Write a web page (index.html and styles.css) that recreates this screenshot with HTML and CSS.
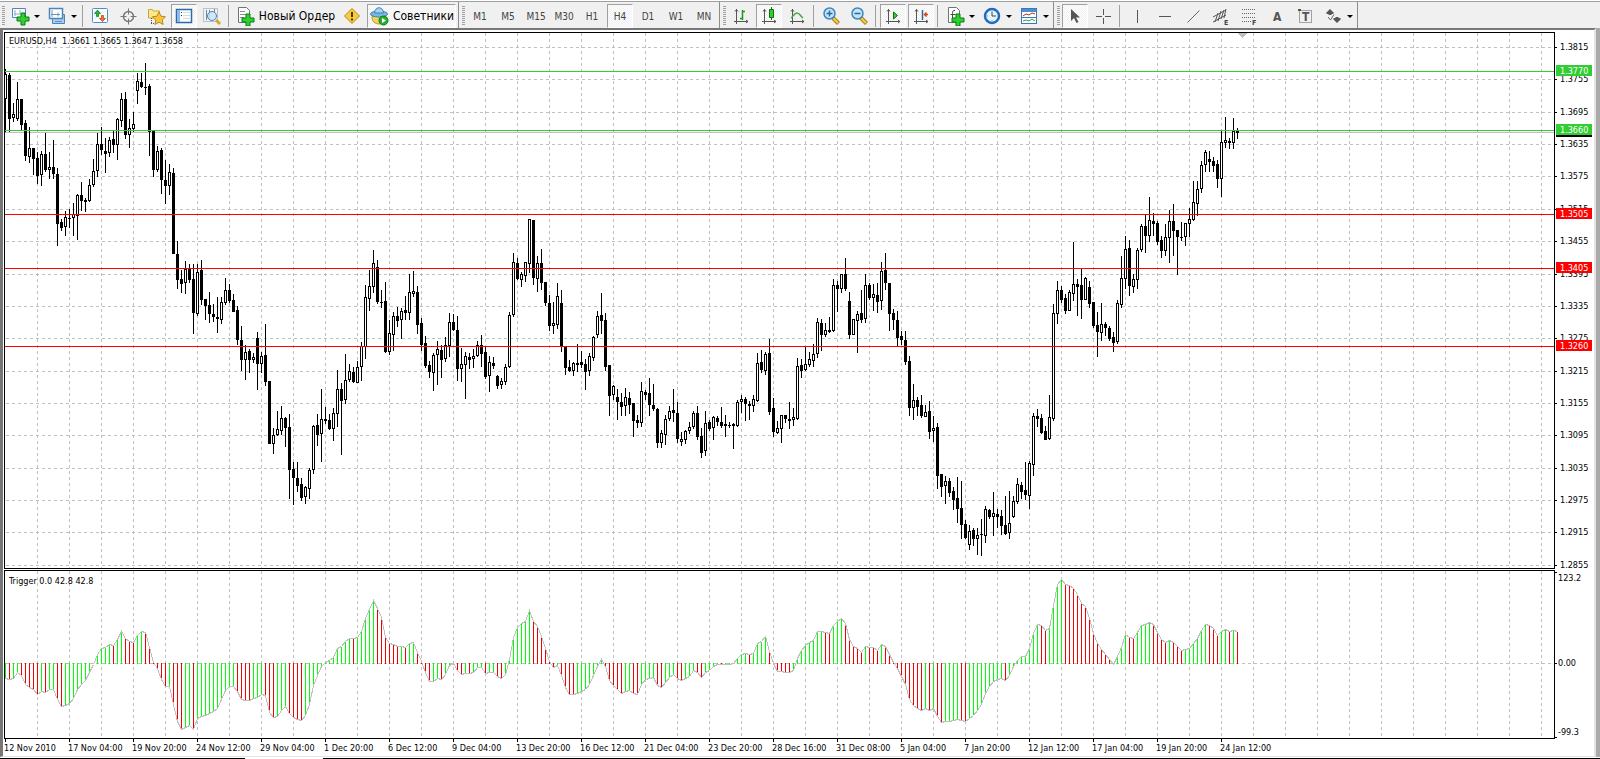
FILE: index.html
```html
<!DOCTYPE html>
<html lang="ru">
<head>
    <meta charset="UTF-8">
    <meta name="viewport" content="width=device-width, initial-scale=1.0">
    <title>EURUSD,H4</title>
    <link rel="stylesheet" href="styles.css">
</head>
<body>
    <header class="toolbars">
        <div class="toolbar">
            <span class="grip"></span>
            <button class="tool drop" aria-label="Новый график">
                <svg width="20" height="20"><path d="M2.5 2.5h13v9h-13z" fill="#fff" stroke="#4a86b8"/><path d="M5 4v6M4 8h9M10 4v3" stroke="#8ab" fill="none"/><path d="M11 7h4v4h4v4h-4v4h-4v-4H7v-4h4z" fill="#2fd02f" stroke="#0a7a14"/></svg>
                <i class="arrow"></i>
            </button>
            <button class="tool drop" aria-label="Профили">
                <svg width="20" height="20"><path d="M5.500 8.500h12v9h-12z" fill="#a8cdf0" stroke="#4a86b8"/><path d="M2.500 2.500h13v10h-13z" fill="#fff" stroke="#4a86b8" stroke-width="1.500"/><path d="M5 4v7M4 8.500h9M11 6.500v4M8 15.500h7" stroke="#6b94b8" fill="none"/></svg>
                <i class="arrow"></i>
            </button>
            <span class="sep"></span>
            <button class="tool" aria-label="Обзор рынка">
                <svg width="20" height="20"><rect x="2.500" y="2.500" width="15" height="14" rx="1" fill="#fff" stroke="#4a90cc"/><path d="M4 6h12M4 9h12M4 12h12" stroke="#dde8f0"/><path d="M7.500 4l3 3.500h-2v3h-2v-3h-2z" fill="#2cb52c" stroke="#127a12" stroke-width=".7"/><path d="M12.500 15.500l-3-3h2v-3h2v3h2z" fill="#f5742e" stroke="#b6400c" stroke-width=".7"/></svg>
            </button>
            <button class="tool" aria-label="Окно данных">
                <svg width="20" height="20" fill="none" stroke="#777"><circle cx="10.500" cy="10.500" r="5" stroke-width="1.500"/><path d="M10.500 2.500v6M10.500 12.500v6M2.500 10.500h6M12.500 10.500h6"/></svg>
            </button>
            <button class="tool" aria-label="Навигатор">
                <svg width="20" height="20"><path d="M2.500 12V3.500h4l1 1.500h6v7z" fill="#fbe88c" stroke="#c9a53a"/><path d="M5.500 12v6M5 17.500h4" stroke="#555" stroke-dasharray="1 1"/><path d="M13 6l2 4.200 4.500.6-3.300 3.100.9 4.600-4.100-2.300-4.100 2.300.9-4.600-3.300-3.100 4.500-.6z" fill="#fbc43c" stroke="#b88a1c"/></svg>
            </button>
            <button class="tool on" aria-label="Терминал">
                <svg width="20" height="20"><rect x="2.500" y="3.500" width="15" height="13" fill="#fff" stroke="#2a6ba8" stroke-width="1.500"/><path d="M3 4h3v12H3z" fill="#8ebce6"/><path d="M7 6.500h1M7 9.500h1" stroke="#333"/><path d="M9 6.500h7M9 9.500h7M9 12.500h7" stroke="#d0dcea"/></svg>
            </button>
            <button class="tool" aria-label="Тестер стратегий">
                <svg width="20" height="20"><path d="M1.500 2.500h14v13h-14z" fill="#f2f4f4" stroke="#b8c0c4"/><path d="M4.500 4v10M7.500 4v9M12.500 3v4" stroke="#6b8ba4"/><circle cx="10" cy="10" r="4.500" fill="#c8e4f8" fill-opacity=".8" stroke="#4a86b8"/><path d="M14 14l4 4" stroke="#d6a52c" stroke-width="3"/></svg>
            </button>
            <span class="sep"></span>
            <button class="tool order">
                <svg width="20" height="20"><path d="M3.500 1.500h8l3 3v12h-11z" fill="#fff" stroke="#6c7478"/><path d="M5 5.500h5M5 8.500h7M5 11.500h4" stroke="#8a9094"/><path d="M11 8h4v4h4v4h-4v4h-4v-4H7v-4h4z" fill="#2fd02f" stroke="#0a7a14"/></svg>
                <span>Новый Ордер</span>
            </button>
            <button class="tool" aria-label="MetaEditor">
                <svg width="20" height="20"><path d="M10 2.500l7.500 7.500-7.500 7.500L2.500 10z" fill="#f7cc3e" stroke="#b58b18" stroke-linejoin="round"/><path d="M10 6v5M10 12.500v2" stroke="#4a3a08" stroke-width="2"/></svg>
            </button>
            <button class="tool on experts">
                <svg width="20" height="20"><ellipse cx="10" cy="12" rx="7" ry="6" fill="#f6d45c" stroke="#b8962c"/><ellipse cx="10" cy="8" rx="8.500" ry="3" fill="#7ab8e4" stroke="#3a80b4"/><path d="M5.500 7C6 0 14 0 14.500 7z" fill="#a4d4f4" stroke="#3a80b4"/><circle cx="14.500" cy="14.500" r="4.500" fill="#24b02c" stroke="#0e7a18"/><path d="M13 12l4 2.500-4 2.500z" fill="#fff"/></svg>
                <span>Советники</span>
            </button>
        </div>

        <div class="toolbar">
            <span class="grip"></span>
            <button class="tool">M1</button>
            <button class="tool">M5</button>
            <button class="tool">M15</button>
            <button class="tool">M30</button>
            <button class="tool">H1</button>
            <button class="tool on">H4</button>
            <button class="tool">D1</button>
            <button class="tool">W1</button>
            <button class="tool">MN</button>
        </div>

        <div class="toolbar">
            <span class="grip"></span>
            <button class="tool" aria-label="Бары">
                <svg width="20" height="20" fill="none" stroke="#555"><path d="M5.500 3v15M3 15.500h14M4 5.500l1.500-2 1.500 2M15 14l2 1.500-2 1.500"/><path d="M11.500 4v10M11 5.500h3M9 12.500h3" stroke="#1a9a1a" stroke-width="1.500"/></svg>
            </button>
            <button class="tool on" aria-label="Свечи">
                <svg width="20" height="20" fill="none" stroke="#555"><path d="M5.500 3v15M3 15.500h14M4 5.500l1.500-2 1.500 2M15 14l2 1.500-2 1.500"/><path d="M12.500 1v13" stroke="#107010"/><path d="M10.500 3.500h4v8h-4z" fill="#2fd02f" stroke="#107010"/></svg>
            </button>
            <button class="tool" aria-label="Линия">
                <svg width="20" height="20" fill="none" stroke="#555"><path d="M5.500 3v15M3 15.500h14M4 5.500l1.500-2 1.500 2M15 14l2 1.500-2 1.500"/><path d="M4 12c2-1 3-5 6-5s3 3 6 5" stroke="#4aa84a" stroke-width="1.500"/></svg>
            </button>
            <span class="sep"></span>
            <button class="tool" aria-label="Увеличить">
                <svg width="20" height="20"><path d="M12 12l5.500 5.500" stroke="#a87a14" stroke-width="4"/><path d="M12 12l5 5" stroke="#f6d24a" stroke-width="2"/><circle cx="8.500" cy="7.500" r="5.500" fill="#c4e4fa" stroke="#3f86bc" stroke-width="1.500"/><path d="M5.500 7.500h6M8.500 4.500v6" stroke="#2a6a9a" stroke-width="1.500"/></svg>
            </button>
            <button class="tool" aria-label="Уменьшить">
                <svg width="20" height="20"><path d="M12 12l5.500 5.500" stroke="#a87a14" stroke-width="4"/><path d="M12 12l5 5" stroke="#f6d24a" stroke-width="2"/><circle cx="8.500" cy="7.500" r="5.500" fill="#c4e4fa" stroke="#3f86bc" stroke-width="1.500"/><path d="M5.500 7.500h6" stroke="#2a6a9a" stroke-width="1.500"/></svg>
            </button>
            <span class="sep"></span>
            <button class="tool on" aria-label="Автопрокрутка">
                <svg width="20" height="20" fill="none" stroke="#555"><path d="M5.500 3v15M3 15.500h14M4 5.500l1.500-2 1.500 2M15 14l2 1.500-2 1.500"/><path d="M10.500 6l4 3.500-4 3.500z" fill="#2fd02f" stroke="#107010"/></svg>
            </button>
            <button class="tool on" aria-label="Сдвиг графика">
                <svg width="20" height="20" fill="none" stroke="#555"><path d="M5.500 3v15M3 15.500h14M4 5.500l1.500-2 1.500 2M15 14l2 1.500-2 1.500"/><path d="M11.500 4v10" stroke="#2a6a9a" stroke-width="1.500"/><path d="M17 8.500h-3M15.500 6.500l-2 2 2 2" stroke="#d0481c" stroke-width="1.500"/></svg>
            </button>
            <span class="sep"></span>
            <button class="tool drop" aria-label="Индикаторы">
                <svg width="20" height="20"><path d="M3.500 1.500h8l3 3v12h-11z" fill="#fff" stroke="#6c7478"/><path d="M10 4.500c-2-.5-2.500 1-2.500 3v6M5.500 8.500h5" fill="none" stroke="#444"/><path d="M11 8h4v4h4v4h-4v4h-4v-4H7v-4h4z" fill="#2fd02f" stroke="#0a7a14"/></svg>
                <i class="arrow"></i>
            </button>
            <button class="tool drop" aria-label="Периоды">
                <svg width="20" height="20"><circle cx="10" cy="10" r="7" fill="#e8f4fc" stroke="#1e6cc0" stroke-width="2.500"/><path d="M10 5.500V10h4" fill="none" stroke="#345"/><path d="M5 10h1M10 14v1" stroke="#68a"/></svg>
                <i class="arrow"></i>
            </button>
            <button class="tool drop" aria-label="Шаблоны">
                <svg width="20" height="20"><rect x="2.500" y="2.500" width="15" height="15" fill="#fff" stroke="#3a7ab4"/><path d="M3 3h14v3H3z" fill="#4a90d0"/><path d="M4 10l3-2 3 1 3-2 3 1" fill="none" stroke="#b03020"/><path d="M3 11.500h14" stroke="#3a7ab4"/><path d="M4 15l3-1 3 1 3-2 3 2" fill="none" stroke="#30a040"/></svg>
                <i class="arrow"></i>
            </button>
        </div>

        <div class="toolbar">
            <span class="grip"></span>
            <button class="tool on" aria-label="Курсор">
                <svg width="20" height="20"><path d="M6 3v12l3-3 2.500 5 2-1-2.500-4.500h4z" fill="#555"/></svg>
            </button>
            <button class="tool" aria-label="Перекрестие">
                <svg width="20" height="20" stroke="#555"><path d="M10.500 3v6M10.500 12v6M3 10.500h6M12 10.500h6"/></svg>
            </button>
            <span class="sep"></span>
            <button class="tool" aria-label="Вертикальная линия">
                <svg width="20" height="20" stroke="#555"><path d="M10.500 4v13"/></svg>
            </button>
            <button class="tool" aria-label="Горизонтальная линия">
                <svg width="20" height="20" stroke="#555"><path d="M4 10.500h12"/></svg>
            </button>
            <button class="tool" aria-label="Трендовая линия">
                <svg width="20" height="20" stroke="#666"><path d="M4.500 16.500l12-12"/></svg>
            </button>
            <button class="tool" aria-label="Равноудалённый канал">
                <svg width="20" height="20" stroke="#555" fill="none"><path d="M2 11L15 4M2 16l13-7M4 16l3-9M7 15l3-10M10 13l3-9M13 12l2-9"/><text x="13" y="19" class="tiny">E</text></svg>
            </button>
            <button class="tool" aria-label="Линии Фибоначчи">
                <svg width="20" height="20" stroke="#666" stroke-dasharray="1 1"><path d="M3 3.500h14M3 7.500h14M3 11.500h14M3 15.500h9"/><text x="13" y="19" class="tiny">F</text></svg>
            </button>
            <button class="tool" aria-label="Текст">
                <svg width="20" height="20"><text x="6" y="15" class="letter">A</text></svg>
            </button>
            <button class="tool" aria-label="Текстовая метка">
                <svg width="20" height="20"><path d="M4.500 4.500h12v12h-12z" fill="none" stroke="#555" stroke-dasharray="1 1"/><path d="M3 3h3v2H3z" fill="#555"/><text x="7" y="15" class="letter">T</text></svg>
            </button>
            <button class="tool drop" aria-label="Стрелки">
                <svg width="20" height="20"><path d="M7 3l4 4-1 1H8.500v1h-3V8H4L3 7zM14 17l-4-4 1-1h1.500v-1h3v1H17l1 1z" fill="#555"/><path d="M5 11l2.500 3L11 8.500" fill="none" stroke="#666"/></svg>
                <i class="arrow"></i>
            </button>
        </div>
    </header>

    <main class="chart-window">
        <svg id="chart" class="chart" role="img" aria-label="EURUSD,H4"></svg>
    </main>
    <footer class="tabs"><span class="tab"></span></footer>
    <script src="script.js"></script>
</body>
</html>
```
FILE: styles.css
```css
body {
    font-family: "DejaVu Sans Condensed", "DejaVu Sans", sans-serif;
    margin: 0;
    background: #aaa;
    overflow-x: hidden;
}

.toolbars {
    display: flex;
    box-sizing: border-box;
    height: 28px;
    padding-top: 1px;
    background: #f0f0f0;
    border-top: 1px solid #fff;
    box-shadow: inset 0 1px #a0a0a0;
}

.toolbar {
    display: flex;
    align-items: stretch;
    padding: 2px 1px 0 2px;
    border-right: 1px solid #8c8c8c;
    margin-right: 1px;
}

.grip {
    width: 3px;
    margin: 2px 1px 2px 0;
    background: repeating-linear-gradient(#a0a0a0 0 1px, #f0f0f0 1px 2px);
}

.sep {
    width: 1px;
    margin: 1px 3px 1px 2px;
    background: #a0a0a0;
}

.tool {
    display: flex;
    align-items: center;
    justify-content: center;
    box-sizing: border-box;
    width: 28px;
    padding: 0;
    border: none;
    background: none;
    color: #444;
    font-family: inherit;
    font-size: 10px;
}

.tool svg {
    flex: none;
}

.tool.drop {
    width: 37px;
    gap: 4px;
}

.tool.order {
    width: 106px;
    gap: 4px;
    color: #000;
    font-size: 12px;
}

.tool.on {
    width: 26px;
    margin: 0 1px;
    border: 1px solid;
    border-color: #a0a0a0 #fff #fff #a0a0a0;
    background: repeating-conic-gradient(#fff 0 25%, #f0f0f0 0 50%) 0 0 / 2px 2px;
}

.tool.experts {
    width: 89px;
    gap: 4px;
    color: #000;
    font-size: 12px;
}

.arrow {
    border: 3px solid transparent;
    border-top-color: #000;
    border-bottom: none;
}

.tiny {
    font-size: 7px;
    font-weight: bold;
    fill: #444;
    stroke: none;
}

.letter {
    font-size: 12px;
    font-weight: bold;
    fill: #555;
}

.chart-window {
    margin-right: 4px;
    border-top: 2px solid #777;
    border-left: 3px solid #777;
    border-right: 2px solid #e3e3e3;
    border-bottom: 1px solid #e3e3e3;
    background: #fff;
}

.chart {
    display: block;
    width: 100%;
    height: 726px;
    shape-rendering: crispEdges;
}

.chart text {
    font-size: 9px;
    white-space: pre;
}

.grid {
    stroke: #c0c0c0;
    stroke-dasharray: 3 3;
    fill: none;
}

.frame {
    stroke: #000;
    fill: none;
}

.trigger {
    stroke: #c0c0c0;
    fill: none;
}

.tabs {
    height: 2px;
    box-sizing: border-box;
    border-top: 1px solid #fff;
    background: #000;
}

.tab {
    display: block;
    width: 78px;
    height: 1px;
    margin-left: 245px;
    background: #fff;
}
```
FILE: script.js
```js
// high, body top, body bottom, low, 1 = bull / 0 = bear
var candles = [
    [69,74,99,132,1],[73,75,119,132,0],[103,114,118,122,1],[82,99,119,121,1],[99,99,125,130,0],[120,123,156,161,0],
    [127,148,157,163,1],[148,148,159,175,0],[152,158,176,184,0],[151,154,175,186,1],[133,154,170,172,0],[152,167,170,179,1],
    [140,167,174,179,0],[168,174,224,246,0],[219,222,228,231,0],[211,217,227,236,1],[209,218,219,228,0],[203,214,218,236,1],
    [194,195,216,240,1],[182,195,201,211,0],[198,200,202,212,0],[179,185,201,202,1],[159,171,185,187,1],[133,144,171,177,1],
    [127,144,150,155,0],[138,151,154,173,0],[137,140,153,157,1],[131,139,145,153,0],[118,119,145,160,1],[93,99,121,127,1],
    [92,99,135,139,0],[119,128,135,148,1],[112,124,129,132,1],[73,81,91,104,1],[73,82,87,88,0],[63,87,88,95,0],
    [84,86,132,156,0],[131,131,170,177,0],[146,151,170,172,1],[148,150,180,194,0],[160,180,186,204,0],[164,172,186,195,1],
    [168,173,254,254,0],[241,254,280,289,0],[270,279,284,293,0],[261,269,283,294,1],[264,269,280,283,0],[264,279,313,334,0],
    [264,272,314,316,1],[260,270,300,305,0],[299,299,306,320,0],[292,305,314,323,0],[304,314,317,322,0],[297,317,319,333,0],
    [297,302,320,324,1],[278,290,303,305,1],[284,290,301,303,0],[294,300,312,312,0],[306,310,340,345,0],[326,340,360,371,0],
    [345,352,360,380,1],[349,351,360,373,0],[353,357,360,363,1],[332,338,364,390,0],[352,356,364,373,1],[324,355,382,386,0],
    [381,381,444,444,0],[428,435,444,454,1],[411,429,435,436,1],[406,418,431,435,1],[417,418,428,447,0],[414,427,470,499,0],
    [462,469,478,505,0],[462,478,486,492,0],[478,484,498,501,0],[486,487,497,504,1],[468,470,489,499,1],[425,426,470,474,1],
    [414,425,435,446,0],[389,419,434,462,1],[407,419,421,424,0],[414,420,429,430,0],[408,413,429,441,1],[370,389,414,427,1],
    [383,389,401,455,0],[354,380,400,404,1],[364,371,380,382,1],[367,372,382,383,0],[361,367,383,383,1],[342,346,367,381,1],
    [285,297,347,359,1],[270,286,299,311,1],[250,263,287,293,1],[260,267,302,304,0],[290,302,303,308,0],[282,301,352,353,0],
    [320,333,352,355,1],[312,316,335,351,1],[307,316,321,327,0],[308,311,320,339,1],[296,310,313,320,0],[274,292,313,320,1],
    [271,291,294,297,1],[286,292,325,334,0],[318,323,345,351,0],[336,343,366,368,0],[361,365,372,378,0],[353,355,373,391,1],
    [341,349,355,385,1],[345,350,360,378,0],[337,345,359,362,1],[313,322,346,357,1],[314,322,330,331,0],[316,330,369,381,0],
    [348,364,369,382,1],[352,356,365,399,1],[353,357,360,369,0],[349,356,359,368,1],[341,345,356,357,1],[335,345,354,367,0],
    [346,352,377,379,0],[356,362,376,392,1],[357,363,366,369,0],[375,376,386,389,0],[378,381,385,389,1],[364,367,382,385,1],
    [312,315,367,368,1],[253,262,315,317,1],[258,263,279,280,0],[272,274,280,287,1],[262,262,276,282,1],[219,219,264,273,1],
    [220,220,278,285,0],[256,263,279,292,1],[249,263,283,290,0],[282,282,303,306,0],[295,303,326,331,0],[302,323,326,334,1],
    [283,296,325,329,1],[290,303,347,352,0],[346,346,368,375,0],[360,367,371,372,0],[362,363,371,376,1],[344,363,365,372,0],
    [351,362,365,368,0],[359,364,372,390,0],[353,356,371,376,1],[336,337,358,361,1],[311,316,335,338,1],[293,315,321,334,0],
    [313,320,367,371,0],[365,365,396,416,0],[385,386,395,400,1],[389,397,402,420,0],[393,402,407,416,0],[388,397,406,416,1],
    [392,398,405,414,0],[403,403,421,437,0],[415,420,423,428,0],[382,391,423,427,1],[390,392,395,400,0],[378,393,405,416,0],
    [384,405,409,411,0],[408,409,443,448,0],[430,433,443,448,1],[415,419,435,445,1],[406,411,419,421,1],[389,410,413,422,0],
    [402,413,439,443,0],[432,439,442,446,1],[430,431,440,444,1],[422,427,431,434,1],[411,413,427,429,1],[406,413,437,440,0],
    [428,436,453,458,0],[411,423,451,456,1],[420,422,429,431,0],[416,417,428,440,1],[416,418,422,426,0],[407,422,426,428,0],
    [415,424,426,437,0],[422,425,426,428,0],[423,424,426,449,0],[400,402,426,427,1],[395,399,402,413,1],[397,399,404,421,0],
    [401,404,406,420,0],[395,399,406,412,1],[353,363,401,402,1],[350,362,370,373,0],[352,354,371,375,1],[339,353,412,415,0],
    [398,408,432,437,0],[421,428,433,434,1],[415,415,429,443,1],[415,415,419,423,0],[402,419,421,429,0],[408,417,420,426,1],
    [358,366,419,420,1],[359,365,371,378,0],[346,364,370,371,1],[352,359,365,367,1],[344,354,361,367,1],[318,322,354,358,1],
    [319,323,335,351,0],[323,330,335,337,1],[317,330,332,333,0],[279,285,331,332,1],[281,285,289,312,0],[274,274,289,293,1],
    [258,274,289,291,0],[292,301,335,339,0],[319,319,335,335,1],[311,314,321,353,1],[290,313,320,323,0],[274,285,319,323,1],
    [283,285,298,300,0],[284,294,298,311,1],[283,295,302,313,0],[262,271,301,310,1],[253,270,283,290,0],[283,283,314,331,0],
    [309,313,320,330,0],[311,320,338,346,0],[331,336,340,345,0],[331,340,362,365,0],[356,361,408,416,0],[384,400,408,420,1],
    [397,400,407,416,0],[395,405,416,418,0],[405,412,417,417,1],[401,411,432,439,0],[416,428,431,442,1],[423,427,476,489,0],
    [474,474,487,497,0],[476,481,486,504,1],[478,481,493,497,0],[487,491,500,510,0],[477,498,509,523,0],[481,508,525,539,0],
    [520,524,538,539,0],[525,531,545,550,1],[528,530,539,546,0],[528,535,539,555,1],[519,534,535,556,0],[506,509,536,543,1],
    [509,510,517,519,0],[492,513,517,536,1],[509,514,517,528,0],[510,516,526,535,0],[496,525,534,535,0],[491,523,533,539,1],
    [496,501,517,518,1],[478,484,502,504,1],[482,485,492,499,0],[462,490,495,500,0],[461,463,496,509,1],[413,416,465,476,1],
    [409,416,419,427,0],[414,418,433,434,0],[426,431,440,440,0],[395,417,439,440,1],[304,313,419,421,1],[281,290,314,324,1],
    [286,290,300,303,0],[294,298,311,314,0],[290,292,311,311,1],[242,284,294,301,1],[279,284,287,316,0],[269,285,300,319,0],
    [277,278,300,300,1],[281,287,304,308,0],[302,302,326,328,0],[312,325,332,357,0],[303,324,333,341,1],[322,324,328,336,0],
    [326,328,339,341,0],[332,337,343,352,0],[300,303,342,344,1],[256,278,305,308,1],[236,249,279,289,1],[240,248,286,296,0],
    [274,279,287,293,1],[248,250,280,289,1],[224,226,250,252,1],[215,226,236,253,0],[197,220,236,242,1],[213,221,224,236,0],
    [221,223,242,245,0],[236,240,251,258,0],[224,237,251,256,1],[210,221,238,263,1],[204,221,231,256,0],[230,230,237,275,0],
    [222,237,238,241,0],[223,223,237,246,1],[208,219,224,237,1],[181,202,220,221,1],[181,189,204,216,1],[161,165,189,193,1],
    [150,152,165,172,1],[151,159,162,172,0],[157,161,166,172,0],[160,164,179,188,0],[131,142,179,197,1],[117,140,143,148,1],
    [138,141,143,149,0],[118,131,143,149,1],[128,131,133,139,0]
];

// Trigger indicator, three units per pixel
var trigger = [
    -45,-47,-44,-27,-35,-62,-71,-78,-94,-85,-86,-78,-77,-107,-128,-125,-120,-104,-78,-63,-50,-27,-2,26,44,48,57,55,73,95,
    74,66,62,84,95,92,48,2,-16,-48,-69,-68,-122,-173,-197,-191,-186,-199,-166,-159,-155,-151,-145,-134,-107,-80,-70,-69,-85,-107,
    -110,-111,-105,-101,-92,-96,-146,-161,-158,-140,-129,-150,-161,-167,-170,-157,-122,-67,-37,-8,4,9,19,44,51,65,76,74,78,95,
    134,162,188,165,138,78,61,56,50,51,48,60,63,33,6,-26,-54,-53,-46,-47,-32,-6,0,-20,-32,-30,-31,-27,-13,-11,
    -29,-28,-27,-40,-44,-34,12,77,107,119,127,160,125,110,80,44,5,-13,-7,-37,-73,-93,-94,-89,-84,-79,-64,-36,-8,11,
    -10,-51,-66,-79,-89,-84,-80,-90,-93,-63,-48,-44,-42,-65,-72,-57,-42,-33,-44,-50,-44,-39,-21,-27,-42,-26,-20,-9,-3,-4,
    -3,-2,-1,14,26,30,26,31,60,65,80,35,0,-23,-24,-27,-28,-21,15,40,54,62,70,96,97,93,90,114,126,134,
    120,73,52,45,33,50,48,47,39,57,52,27,2,-16,-38,-64,-108,-126,-135,-141,-135,-141,-136,-159,-177,-175,-174,-170,-168,-170,
    -174,-165,-155,-141,-124,-90,-70,-55,-48,-44,-50,-35,-10,10,20,21,44,90,117,114,99,105,174,238,251,237,233,224,208,180,
    170,134,90,60,43,28,11,-2,20,48,87,78,74,92,115,118,123,116,93,71,64,69,63,50,39,42,45,60,74,99,
    117,113,104,84,96,102,97,100,96
];

var prices = ["1.3815", "1.3755", "1.3695", "1.3635", "1.3575", "1.3515", "1.3455", "1.3395", "1.3335",
    "1.3275", "1.3215", "1.3155", "1.3095", "1.3035", "1.2975", "1.2915", "1.2855"];
var priceRows = [47, 79, 112, 144, 176, 209, 241, 274, 306, 338, 371, 403, 435, 468, 500, 532, 565];

var dates = ["12 Nov 2010", "17 Nov 04:00", "19 Nov 20:00", "24 Nov 12:00", "29 Nov 04:00", "1 Dec 20:00",
    "6 Dec 12:00", "9 Dec 04:00", "13 Dec 20:00", "16 Dec 12:00", "21 Dec 04:00", "23 Dec 20:00",
    "28 Dec 16:00", "31 Dec 08:00", "5 Jan 04:00", "7 Jan 20:00", "12 Jan 12:00", "17 Jan 04:00",
    "19 Jan 20:00", "24 Jan 12:00"];

var levels = [
    { price: "1.3770", y: 71, color: "#32cd32" },
    { price: "1.3660", y: 130, color: "#32cd32" },
    { price: "1.3505", y: 214, color: "#ff0000" },
    { price: "1.3405", y: 268, color: "#ff0000" },
    { price: "1.3260", y: 346, color: "#ff0000" }
];

var LEFT = 4;
var ZERO = 663;
var svg = document.getElementById("chart");

function rect(x, y, w, h, color) {
    return '<rect x="' + x + '" y="' + y + '" width="' + w + '" height="' + h + '" fill="' + color + '"/>';
}

function text(x, y, str, color) {
    return '<text x="' + x + '" y="' + y + '" fill="' + (color || "#000") + '">' + str + '</text>';
}

function drawChart() {
    var width = svg.clientWidth;
    var height = svg.clientHeight;
    var right = width - 37;
    var out = "";
    var i, x, y;

    svg.setAttribute("viewBox", "3 30 " + width + " " + height);

    // grid
    var grid = "";
    for (x = 37; x < right; x += 32) {
        grid += "M" + (x + 0.5) + " 33V568M" + (x + 0.5) + " 571V738";
    }
    priceRows.concat(ZERO).forEach(function(row) {
        grid += "M6 " + (row + 0.5) + "H" + right;
    });
    out += '<path class="grid" d="' + grid + '"/>';
    out += rect(5, 132, right - 5, 1, "#c0c0c0");
    out += '<path d="M1238 33h9l-4.500 5z" fill="#c0c0c0"/>';

    // candles
    candles.forEach(function(c, n) {
        x = 5 + n * 4;
        out += rect(x, c[0], 1, c[3] - c[0], "#000");
        out += rect(x - 1, c[1], 3, c[2] - c[1], "#000");
        if (c[4]) {
            out += rect(x, c[1] + 1, 1, c[2] - c[1] - 2, "#fff");
        }
    });

    // indicator
    var line = "";
    trigger.forEach(function(v, n) {
        x = 5 + n * 4;
        y = Math.round(ZERO - v / 3);
        line += (n ? "L" : "M") + (x + 0.5) + " " + (y + 0.5);
        var rising = n === 0 || v > trigger[n - 1];
        var color = rising ? "#00ff00" : "#f00000";
        out += rect(x, Math.min(y + 1, ZERO), 1, Math.max(Math.abs(y - ZERO), 1), color);
    });
    out += '<path class="trigger" d="' + line + '"/>';

    // frames
    out += '<path class="frame" d="M4.500 32.500H' + (right + 0.5) + 'V568.500H4.500zM4.500 570.500H' + (right + 0.5) + 'V738.500H4.500z"/>';

    // price axis
    prices.forEach(function(price, n) {
        out += rect(right + 1, priceRows[n], 2, 1, "#000");
        out += text(right + 6, priceRows[n] + 3, price);
    });
    out += rect(right + 1, ZERO, 2, 1, "#000") + rect(right + 1, 572, 2, 1, "#000") + rect(right + 1, 737, 2, 1, "#000");
    out += text(right + 4, 581, "123.2") + text(right + 4, 666, "0.00") + text(right + 4, 735, "-99.3");

    // level lines and their tags
    out += rect(right + 2, 126, 36, 11, "#000");
    levels.forEach(function(level) {
        out += rect(5, level.y, right - 5, 1, level.color);
        out += rect(right + 2, level.y - 6, 36, 11, level.color);
        out += text(right + 6, level.y + 3, level.price, "#fff");
    });

    // date axis
    for (i = 0; i < dates.length; i++) {
        out += rect(5 + i * 64, 739, 1, 3, "#000");
        out += text(LEFT + i * 64, 751, dates[i]);
    }

    out += text(9, 44, "EURUSD,H4  1.3661 1.3665 1.3647 1.3658");
    out += text(9, 584, "Trigger 0.0 42.8 42.8");

    svg.innerHTML = out;
}

window.addEventListener("resize", drawChart);
drawChart();
```
